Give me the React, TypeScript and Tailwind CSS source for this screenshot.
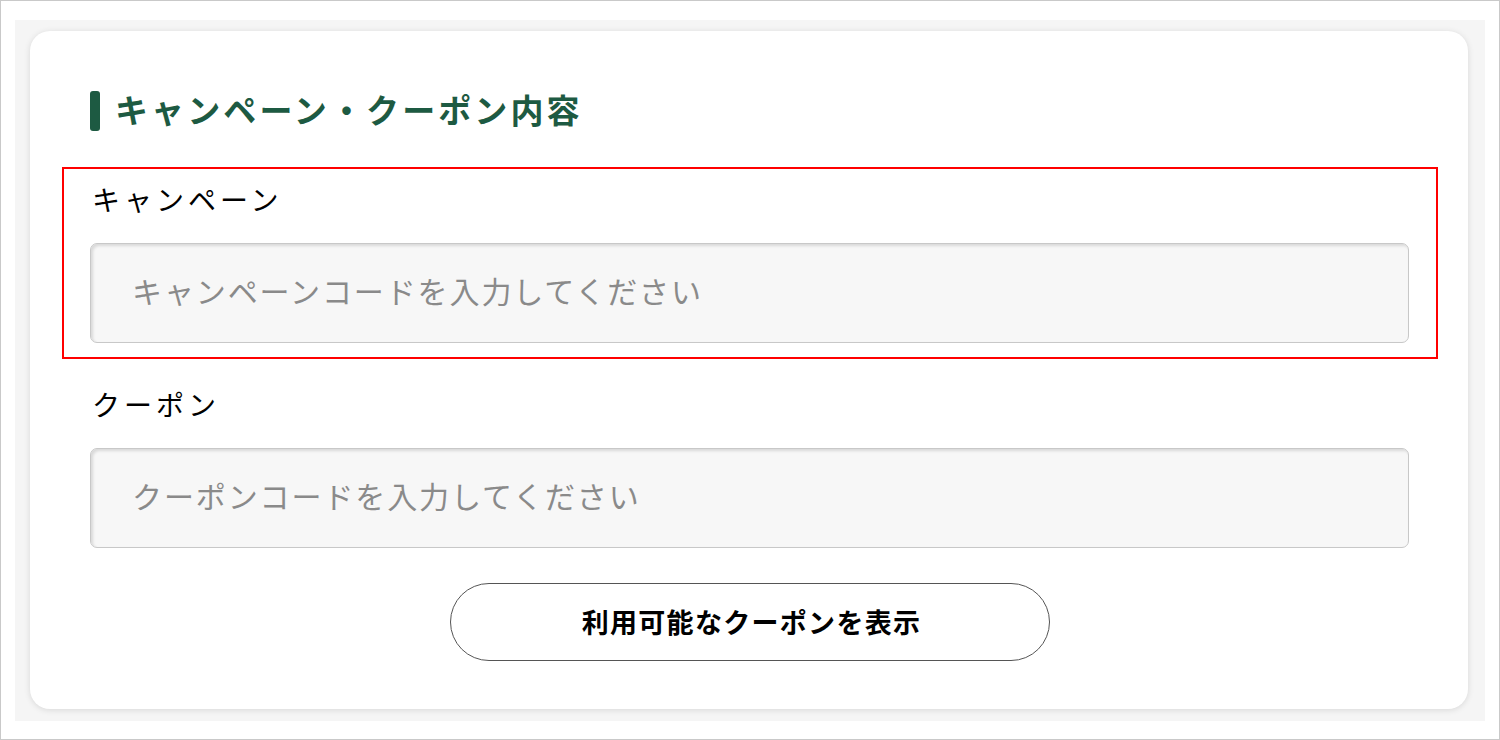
import React from "react";

const jp = "font-['Noto_Sans_CJK_JP','Noto_Sans',sans-serif]";

function Field({ label, placeholder }: { label: string; placeholder: string }) {
  return (
    <div className="flex flex-col">
      <div className="h-[40px] flex items-center pl-[2px] text-[28px] tracking-[4px] text-black leading-none">
        {label}
      </div>
      <input
        type="text"
        placeholder={placeholder}
        className={`mt-[24px] h-[100px] w-full rounded-[7px] border border-[#c8c8c8] bg-[#f7f7f7] pl-[41px] pb-[6px] text-[30px] tracking-[1.9px] text-[#333] placeholder:text-[#8a8a8a] shadow-[inset_2px_2px_3px_rgba(0,0,0,0.12)] outline-none ${jp}`}
      />
    </div>
  );
}

export default function App() {
  return (
    <div className={`w-[1500px] h-[740px] border border-[#c9c9c9] bg-white pl-[14px] pr-[14px] pt-[19px] pb-[18px] ${jp}`}>
      <div className="h-full w-full bg-[#f5f5f5] pl-[15px] pr-[17px] pt-[11px] pb-[12px]">
        <div className="h-full w-full rounded-[20px] bg-white shadow-[0_1px_6px_rgba(0,0,0,0.12)] pl-[60px] pr-[59px] pt-[60px]">
          <div className="flex h-[40px] items-center">
            <div className="h-[40px] w-[10px] rounded-[3px] bg-[#1d5a42]" />
            <h2 className="ml-[15px] -mt-[3px] text-[33px] font-bold tracking-[3.1px] text-[#1d5a42] leading-none">
              キャンペーン・クーポン内容
            </h2>
          </div>

          <div className="relative mt-[48px]">
            <div className="pointer-events-none absolute -left-[28px] -right-[29px] -top-[12px] -bottom-[16px] border-2 border-[#ff0000]" />
            <Field label="キャンペーン" placeholder="キャンペーンコードを入力してください" />
          </div>

          <div className="mt-[41px]">
            <Field label="クーポン" placeholder="クーポンコードを入力してください" />
          </div>

          <div className="mt-[35px] flex justify-center">
            <button
              type="button"
              className={`h-[78px] w-[600px] rounded-full border border-[#555] bg-white pl-[4px] text-[27px] font-bold tracking-[1.3px] text-black ${jp}`}
            >
              利用可能なクーポンを表示
            </button>
          </div>
        </div>
      </div>
    </div>
  );
}
